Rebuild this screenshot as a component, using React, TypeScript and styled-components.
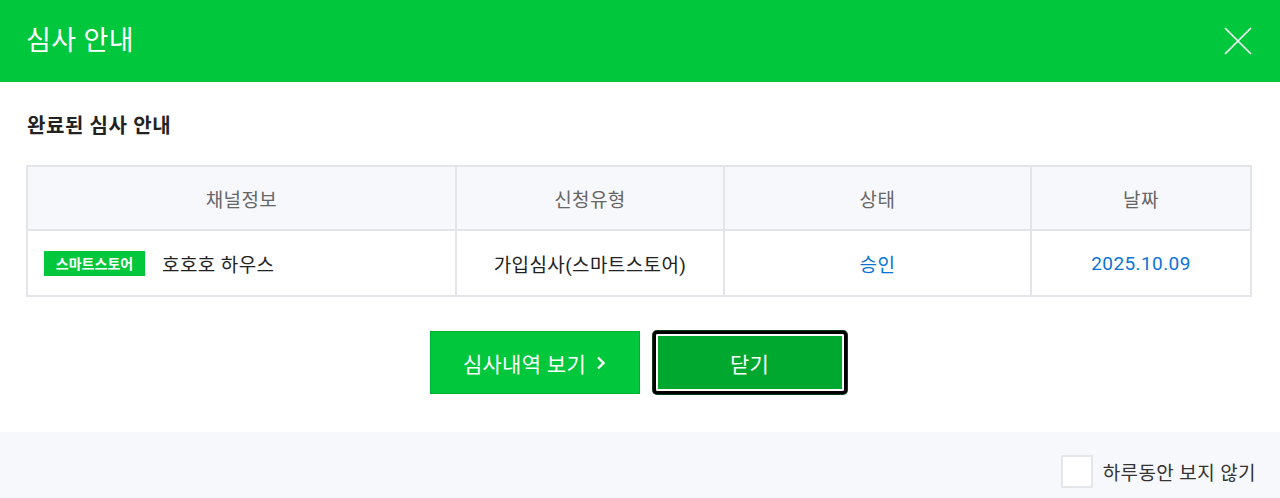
import styled, { createGlobalStyle } from 'styled-components';

const GlobalStyle = createGlobalStyle`
  html, body {
    margin: 0;
    padding: 0;
    background: #fff;
  }
  body {
    font-family: Roboto, "Noto Sans CJK KR", "Noto Sans", sans-serif;
    color: #222;
  }
  * { box-sizing: border-box; }
`;

const Modal = styled.div`
  width: 1280px;
  height: 498px;
  display: flex;
  flex-direction: column;
  background: #fff;
`;

const Header = styled.header`
  height: 82px;
  flex: none;
  background: #00c73c;
  display: flex;
  align-items: center;
  justify-content: space-between;
  padding: 0 28px 0 26px;
`;

const Title = styled.h1`
  margin: 0;
  color: #fff;
  font-size: 27px;
  font-weight: 400;
  letter-spacing: 0.4px;
  line-height: 1;
`;

const CloseButton = styled.button`
  width: 28px;
  height: 28px;
  padding: 0;
  border: 0;
  background: none;
  cursor: pointer;
  display: flex;
`;

const Body = styled.section`
  flex: 1;
  padding: 28px 30px 0 26px;
`;

const SubTitle = styled.h2`
  margin: 0 0 0 1px;
  font-size: 20px;
  font-weight: 700;
  color: #222;
  line-height: 32px;
  letter-spacing: 0.6px;
`;

const Table = styled.table`
  margin-top: 23px;
  width: 1224px;
  border-collapse: collapse;
  table-layout: fixed;
  font-size: 19px;
  letter-spacing: 0.4px;

  th, td {
    border: 2px solid #e3e5e9;
    text-align: center;
  }
`;

const Th = styled.th`
  height: 64px;
  background: #f7f8fb;
  font-weight: 400;
  color: #666;
`;

const Td = styled.td<{ $blue?: boolean; $left?: boolean }>`
  height: 66px;
  color: ${(p) => (p.$blue ? '#0a74d5' : '#222')};
  text-align: ${(p) => (p.$left ? 'left' : 'center')} !important;
  padding: ${(p) => (p.$left ? '0 0 0 16px' : '0')};
`;

const Channel = styled.div`
  display: flex;
  align-items: center;
  gap: 17px;
`;

const Badge = styled.span`
  display: inline-flex;
  align-items: center;
  justify-content: center;
  width: 101px;
  height: 25px;
  background: #00c73c;
  color: #fff;
  font-size: 14px;
  font-weight: 700;
  letter-spacing: 0;
`;

const Actions = styled.div`
  margin-top: 34px;
  display: flex;
  justify-content: center;
  gap: 13px;
`;

const Button = styled.button<{ $focus?: boolean }>`
  height: 63px;
  width: ${(p) => (p.$focus ? '194px' : '210px')};
  font-family: inherit;
  font-size: 21px;
  letter-spacing: 0.3px;
  color: #fff;
  cursor: pointer;
  display: flex;
  align-items: center;
  justify-content: center;
  gap: 10px;
  background: ${(p) => (p.$focus ? '#00a82f' : '#00c73c')};
  border: ${(p) => (p.$focus ? '3px solid #000' : '1px solid #00b034')};
  border-radius: ${(p) => (p.$focus ? '4px' : '0')};
  box-shadow: ${(p) => (p.$focus ? 'inset 0 0 0 2px #fff, 0 0 0 1px #0d3a14' : 'none')};
`;

const Footer = styled.footer`
  height: 66px;
  flex: none;
  background: #f7f8fb;
  display: flex;
  align-items: center;
  justify-content: flex-end;
  padding: 0 24px 0 0;
`;

const CheckLabel = styled.label`
  display: flex;
  align-items: center;
  gap: 10px;
  font-size: 19px;
  letter-spacing: 0.4px;
  color: #333;
  cursor: pointer;
  margin-top: 12px;
`;

const CheckBox = styled.span`
  width: 32px;
  height: 33px;
  background: #fff;
  border: 2px solid #e4e6ea;
`;

const App = () => (
  <>
    <GlobalStyle />
    <Modal>
      <Header>
        <Title>심사 안내</Title>
        <CloseButton aria-label="닫기">
          <svg width="28" height="28" viewBox="0 0 28 28">
            <path d="M1 1L27 27M27 1L1 27" stroke="#fff" strokeWidth="1.6" fill="none" />
          </svg>
        </CloseButton>
      </Header>
      <Body>
        <SubTitle>완료된 심사 안내</SubTitle>
        <Table>
          <colgroup>
            <col style={{ width: 429 }} />
            <col style={{ width: 268 }} />
            <col style={{ width: 307 }} />
            <col style={{ width: 220 }} />
          </colgroup>
          <thead>
            <tr>
              <Th>채널정보</Th>
              <Th>신청유형</Th>
              <Th>상태</Th>
              <Th>날짜</Th>
            </tr>
          </thead>
          <tbody>
            <tr>
              <Td $left>
                <Channel>
                  <Badge>스마트스토어</Badge>
                  호호호 하우스
                </Channel>
              </Td>
              <Td>가입심사(스마트스토어)</Td>
              <Td $blue>승인</Td>
              <Td $blue>2025.10.09</Td>
            </tr>
          </tbody>
        </Table>
        <Actions>
          <Button>
            심사내역 보기
            <svg width="10" height="14" viewBox="0 0 10 14">
              <path d="M2 1.5L7.5 7L2 12.5" stroke="#fff" strokeWidth="2.4" fill="none" />
            </svg>
          </Button>
          <Button $focus>닫기</Button>
        </Actions>
      </Body>
      <Footer>
        <CheckLabel>
          <CheckBox />
          하루동안 보지 않기
        </CheckLabel>
      </Footer>
    </Modal>
  </>
);

export default App;
